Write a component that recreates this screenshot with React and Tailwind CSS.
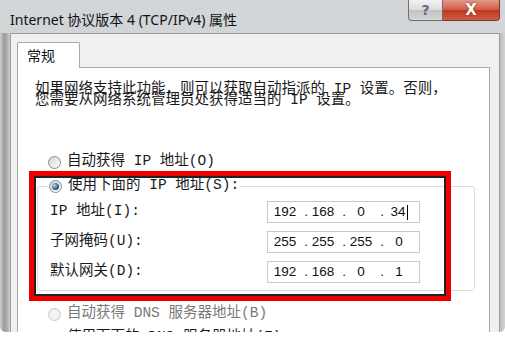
import { Fragment } from "react";

const songti = "font-['Liberation_Mono','Noto_Sans_CJK_SC',monospace]";

function Radio({ checked, disabled }) {
  return (
    <span
      className={
        "flex h-[13px] w-[13px] shrink-0 items-center justify-center rounded-full border " +
        (disabled
          ? "border-[#c8c8c8] bg-[#f2f2f2]"
          : "border-[#8a8a8a] bg-[linear-gradient(135deg,#d4d4d4,#ffffff)]")
      }
    >
      {checked && (
        <span className="h-[7px] w-[7px] rounded-full bg-[radial-gradient(circle_at_35%_35%,#b0d4f2,#2c5d8c_60%,#1a3a5a)]" />
      )}
    </span>
  );
}

function IpField({ parts, caret }) {
  return (
    <div className="flex h-[22px] w-[153px] items-center border border-[#c9c9c9] bg-white pl-[2px] font-['Liberation_Sans',sans-serif] text-[13.5px] text-[#111]">
      {parts.map((p, i) => (
        <Fragment key={i}>
          <span className="w-[30px] text-center">
            {p}
            {caret && i === 3 && (
              <span className="ml-[1px] inline-block h-[15px] w-px bg-black align-middle" />
            )}
          </span>
          {i < 3 && <span className="w-[8px] text-right">.</span>}
        </Fragment>
      ))}
    </div>
  );
}

function Row({ label, parts, caret }) {
  return (
    <div className="flex h-[22px] items-center">
      <span className={"w-[221px] pl-[4px] text-[14.5px] text-[#1a1a1a] " + songti}>{label}</span>
      <IpField parts={parts} caret={caret} />
    </div>
  );
}

export default function App() {
  return (
    <div className="relative h-[346px] w-[505px] overflow-hidden bg-white">
      <div className="flex h-[332px] w-[505px] flex-col overflow-hidden rounded-b-[6px] bg-[linear-gradient(180deg,#d3d6d9,#cfd2d5_40%,#c9ccce)]">
        {/* title bar */}
        <div className="flex h-[33px] shrink-0 items-start">
          <span className="pl-[10px] pt-[10px] font-['Noto_Sans','Noto_Sans_CJK_SC',sans-serif] text-[14px] leading-[20px] text-[#111]">
            Internet 协议版本 4 (TCP/IPv4) 属性
          </span>
          <div className="ml-auto mr-[5px] flex h-[21px]">
            <div className="flex w-[35px] items-center justify-center rounded-bl-[4px] border border-t-0 border-[#707070] bg-[linear-gradient(180deg,#f2f2f2,#dcdcdc_50%,#c2c2c2_51%,#d6d6d6)] font-['DejaVu_Sans',sans-serif] text-[14px] font-bold text-[#5b6b7c]">
              ?
            </div>
            <div className="flex w-[57px] items-center justify-center rounded-br-[4px] border border-l-0 border-t-0 border-[#6e3a33] bg-[linear-gradient(180deg,#e29a8c,#d25a43_50%,#bd3620_51%,#d45c44)] font-['DejaVu_Sans',sans-serif] text-[15px] font-bold text-white [text-shadow:0_0_2px_#5a1a10]">
              X
            </div>
          </div>
        </div>

        {/* body */}
        <div className="flex flex-1">
          <div className="w-[10px] shrink-0 bg-[linear-gradient(90deg,#cfcfcf,#9c9c9c_40%,#b4b4b4_80%,#d6d6d6)]" />
          <div className="flex flex-1 flex-col border-l border-r border-t border-[#9c9c9c] bg-[#f0f0f0] pl-[6px] pt-[8px]">
            {/* tab */}
            <div className="relative z-10 -mb-px flex h-[26px] w-[63px] items-center rounded-t-[2px] border border-b-0 border-[#a8a8a8] bg-white pl-[9px] font-['Noto_Sans_CJK_SC',sans-serif] text-[14px] text-[#111]">
              常规
            </div>
            {/* tab page */}
            <div className="flex w-[473px] flex-1 flex-col border border-[#a8a8a8] bg-white pl-[17px] pt-[16px]">
              <p className={"text-[14.5px] leading-[10.5px] text-[#1a1a1a] " + songti}>
                如果网络支持此功能，则可以获取自动指派的 IP 设置。否则，
                <br />
                您需要从网络系统管理员处获得适当的 IP 设置。
              </p>

              <div className={"mt-[47px] flex h-[20px] items-center gap-[6px] pl-[13px] text-[14.5px] text-[#1a1a1a] " + songti}>
                <Radio />
                <span>自动获得 IP 地址(O)</span>
              </div>

              <fieldset className="mt-[4px] ml-[2px] w-[438px] rounded-[3px] border border-[#d5dde2] px-[8px] pb-[7px]">
                <legend className={"ml-[2px] flex h-[20px] items-center gap-[6px] px-[1px] text-[14.5px] text-[#1a1a1a] " + songti}>
                  <Radio checked />
                  <span>使用下面的 IP 地址(S):</span>
                </legend>
                <div className="mt-[5px] flex flex-col gap-[8px]">
                  <Row label="IP 地址(I):" parts={["192", "168", "0", "34"]} caret />
                  <Row label="子网掩码(U):" parts={["255", "255", "255", "0"]} />
                  <Row label="默认网关(D):" parts={["192", "168", "0", "1"]} />
                </div>
              </fieldset>

              <div className={"mt-[13px] flex h-[20px] items-center gap-[6px] pl-[13px] text-[14.5px] text-[#7a7a7a] " + songti}>
                <Radio disabled />
                <span>自动获得 DNS 服务器地址(B)</span>
              </div>
              <div className={"mt-[4px] flex h-[20px] items-center gap-[6px] pl-[13px] text-[14.5px] text-[#1a1a1a] " + songti}>
                <Radio checked />
                <span>使用下面的 DNS 服务器地址(E):</span>
              </div>
            </div>
          </div>
          <div className="w-[5px] shrink-0 bg-[linear-gradient(90deg,#bdbdbd,#d2d2d2)]" />
        </div>
      </div>

      {/* red annotation frame */}
      <div className="absolute left-[29px] top-[171px] h-[130px] w-[422px] border-[5px] border-[#ee0000]">
        <div className="h-full w-full border-2 border-[#222]" />
      </div>
    </div>
  );
}
